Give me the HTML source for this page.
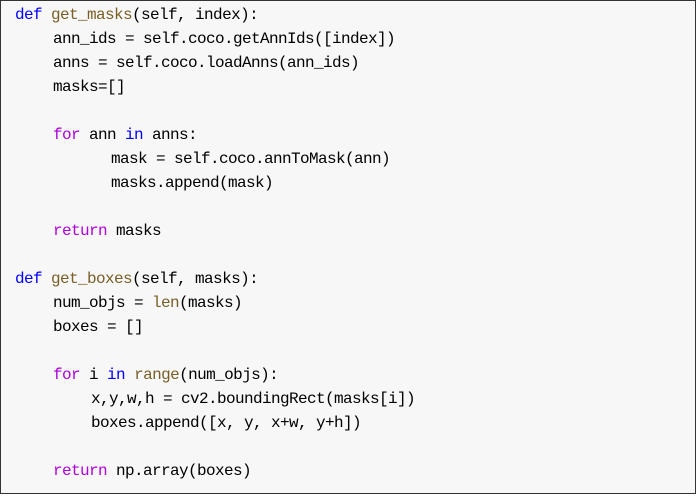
<!DOCTYPE html>
<html><head><style>
body{margin:0;background:#fff;}
.box{position:absolute;left:0;top:0;width:694px;height:492px;background:#f7f7f7;border:1px solid #333;}
.l{position:absolute;height:24px;line-height:24px;font-family:"Liberation Mono",monospace;font-size:16px;letter-spacing:-0.6px;color:#000;white-space:pre;margin-top:-2px;}
.k{color:#0000ff}.p{color:#af00db}.f{color:#795e26}
</style></head><body><div class="box"></div>
<div class="l" style="left:15px;top:5px"><span class="k">def</span> <span class="f">get_masks</span>(self, index):</div>
<div class="l" style="left:53px;top:29px">ann_ids = self.coco.getAnnIds([index])</div>
<div class="l" style="left:53px;top:53px">anns = self.coco.loadAnns(ann_ids)</div>
<div class="l" style="left:53px;top:77px">masks=[]</div>
<div class="l" style="left:53px;top:125px"><span class="p">for</span> ann <span class="k">in</span> anns:</div>
<div class="l" style="left:111px;top:149px">mask = self.coco.annToMask(ann)</div>
<div class="l" style="left:111px;top:173px">masks.append(mask)</div>
<div class="l" style="left:53px;top:221px"><span class="p">return</span> masks</div>
<div class="l" style="left:15px;top:269px"><span class="k">def</span> <span class="f">get_boxes</span>(self, masks):</div>
<div class="l" style="left:53px;top:293px">num_objs = <span class="f">len</span>(masks)</div>
<div class="l" style="left:53px;top:317px">boxes = []</div>
<div class="l" style="left:53px;top:365px"><span class="p">for</span> i <span class="k">in</span> <span class="f">range</span>(num_objs):</div>
<div class="l" style="left:91px;top:389px">x,y,w,h = cv2.boundingRect(masks[i])</div>
<div class="l" style="left:91px;top:413px">boxes.append([x, y, x+w, y+h])</div>
<div class="l" style="left:53px;top:461px"><span class="p">return</span> np.array(boxes)</div>
</body></html>
